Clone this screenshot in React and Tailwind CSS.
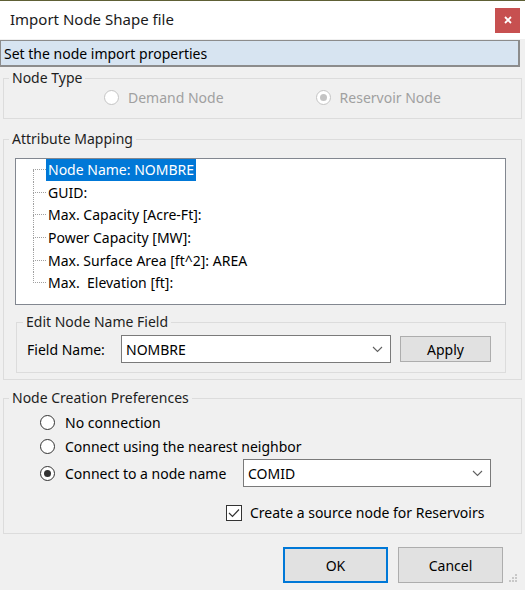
import React from 'react';

const font = { fontFamily: '"Noto Sans", "Open Sans", sans-serif' };

const Radio = ({ checked, disabled }) => (
    <span
        className={`flex items-center justify-center w-[15px] h-[15px] rounded-full border bg-white ${disabled ? 'border-[#c4c4c4]' : 'border-[#333333]'}`}
    >
        {checked && (
            <span className={`w-[7px] h-[7px] rounded-full ${disabled ? 'bg-[#c4c4c4]' : 'bg-[#333333]'}`} />
        )}
    </span>
);

const Chevron = () => (
    <svg width="11" height="7" viewBox="0 0 11 7" className="shrink-0">
        <path d="M1 1 L5.5 5.5 L10 1" fill="none" stroke="#606060" strokeWidth="1.1" />
    </svg>
);

const Combo = ({ value, className }) => (
    <div className={`flex items-center justify-between bg-white border border-[#7a7a7a] pl-[4px] pr-[7px] h-[28px] ${className}`}>
        <span>{value}</span>
        <Chevron />
    </div>
);

const treeItems = [
    'Node Name: NOMBRE',
    'GUID:',
    'Max. Capacity [Acre-Ft]:',
    'Power Capacity [MW]:',
    'Max. Surface Area [ft^2]: AREA',
    'Max.  Elevation [ft]:',
];

const TreeRow = ({ label, first, last, selected }) => (
    <div className="flex h-[22.6px]">
        {/* connector lines */}
        <div className="flex flex-col w-[13px] ml-[17px] shrink-0">
            <div className={`h-1/2 border-b border-dotted border-[#a0a0a0] ${first ? '' : 'border-l'}`} />
            <div className={`h-1/2 border-dotted border-[#a0a0a0] ${last ? '' : 'border-l'}`} />
        </div>
        <div className="flex items-center">
            <span
                className={`px-[2px] leading-[22px] whitespace-pre ${selected ? 'bg-[#0078d7] text-white' : 'text-black'}`}
            >
                {label}
            </span>
        </div>
    </div>
);

const Group = ({ title, className, children }) => (
    <fieldset className={`border border-[#dcdcdc] mx-[3px] ${className}`}>
        <legend className="ml-[5px] px-[3px] leading-[18px] text-[#1e1e1e]">{title}</legend>
        {children}
    </fieldset>
);

export default function App() {
    return (
        <div className="w-[525px] h-[590px] bg-[#f0f0f0] text-[14px] text-black overflow-hidden" style={font}>
            {/* Title bar */}
            <div className="h-px bg-[#5e6035]" />
            <div className="h-[38px] bg-white flex items-center justify-between pl-[10px] pr-[5px]">
                <span className="text-[15px] text-[#1a1a1a] mt-[-1px]">Import Node Shape file</span>
                <button className="w-[25px] h-[25px] bg-[#c75050] flex items-center justify-center">
                    <svg width="8" height="8" viewBox="0 0 8 8">
                        <path d="M1 1 L7 7 M7 1 L1 7" stroke="white" strokeWidth="1.8" />
                    </svg>
                </button>
            </div>

            {/* Header */}
            <div className="mt-px w-[520px] h-[27px] bg-[#d7e4f1] border border-[#8c8c8c] border-r-2 border-b-2 flex items-center pl-[3px]">
                Set the node import properties
            </div>

            {/* Node Type */}
            <Group title="Node Type" className="mt-[2px] h-[50px]">
                <div className="flex items-center h-[20px] text-[#a0a0a0]">
                    <div className="flex items-center gap-[9px] ml-[100px]">
                        <Radio disabled />
                        <span>Demand Node</span>
                    </div>
                    <div className="flex items-center gap-[9px] ml-[92px]">
                        <Radio disabled checked />
                        <span>Reservoir Node</span>
                    </div>
                </div>
            </Group>

            {/* Attribute Mapping */}
            <Group title="Attribute Mapping" className="mt-[11px] h-[250px]">
                <div className="mt-[10px] ml-[11px] w-[491px] h-[147px] bg-white border border-[#828790]">
                    {treeItems.map((item, i) => (
                        <TreeRow
                            key={item}
                            label={item}
                            first={i === 0}
                            last={i === treeItems.length - 1}
                            selected={i === 0}
                        />
                    ))}
                </div>
                <fieldset className="mt-[8px] ml-[12px] w-[490px] h-[60px] border border-[#dcdcdc]">
                    <legend className="ml-[6px] px-[3px] leading-[18px] text-[#1e1e1e]">Edit Node Name Field</legend>
                    <div className="flex items-center mt-[4px] pl-[10px]">
                        <span className="w-[94px]">Field Name:</span>
                        <Combo value="NOMBRE" className="w-[270px]" />
                        <button className="ml-[9px] w-[91px] h-[26px] bg-[#e1e1e1] border border-[#adadad]">
                            Apply
                        </button>
                    </div>
                </fieldset>
            </Group>

            {/* Node Creation Preferences */}
            <Group title="Node Creation Preferences" className="mt-[9px] h-[145px]">
                <div className="flex flex-col pl-[36px] pt-[3px]">
                    <div className="flex items-center gap-[10px] h-[24px]">
                        <Radio />
                        <span>No connection</span>
                    </div>
                    <div className="flex items-center gap-[10px] h-[24px]">
                        <Radio />
                        <span>Connect using the nearest neighbor</span>
                    </div>
                    <div className="flex items-center h-[28px] mt-[1px]">
                        <Radio checked />
                        <span className="ml-[10px] w-[178px]">Connect to a node name</span>
                        <Combo value="COMID" className="w-[248px]" />
                    </div>
                    <div className="flex items-center gap-[8px] mt-[15px] ml-[186px]">
                        <span className="w-[16px] h-[16px] bg-white border border-[#333333] flex items-center justify-center">
                            <svg width="12" height="10" viewBox="0 0 12 10">
                                <path d="M1 5 L4.5 8.5 L11 1.5" fill="none" stroke="#333333" strokeWidth="1.2" />
                            </svg>
                        </span>
                        <span>Create a source node for Reservoirs</span>
                    </div>
                </div>
            </Group>

            {/* Buttons */}
            <div className="flex justify-end gap-[10px] pr-[22px] mt-[13px]">
                <button className="w-[105px] h-[36px] bg-[#e1e1e1] border-2 border-[#0078d7]">OK</button>
                <button className="w-[105px] h-[36px] bg-[#e1e1e1] border border-[#adadad]">Cancel</button>
            </div>
            <div className="flex justify-end pr-[7px] mt-[-9px]">
                <svg width="9" height="9" viewBox="0 0 9 9">
                    <rect x="6" y="0" width="2" height="2" fill="#c8c8c8" />
                    <rect x="3" y="3" width="2" height="2" fill="#c8c8c8" />
                    <rect x="6" y="3" width="2" height="2" fill="#c8c8c8" />
                    <rect x="0" y="6" width="2" height="2" fill="#c8c8c8" />
                    <rect x="3" y="6" width="2" height="2" fill="#c8c8c8" />
                    <rect x="6" y="6" width="2" height="2" fill="#c8c8c8" />
                </svg>
            </div>
        </div>
    );
}
